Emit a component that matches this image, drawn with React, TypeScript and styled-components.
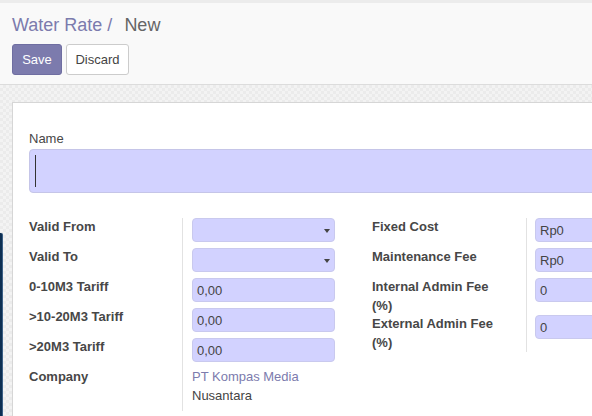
import styled, { createGlobalStyle } from "styled-components";

const GlobalStyle = createGlobalStyle`
  html, body {
    margin: 0;
    padding: 0;
    background: #f9f9f9;
  }
  * {
    box-sizing: border-box;
  }
`;

const Page = styled.div`
  position: relative;
  display: flex;
  flex-direction: column;
  width: 592px;
  height: 416px;
  overflow: hidden;
  font-family: "Liberation Sans", Arial, sans-serif;
  font-size: 13px;
  color: #474747;
`;

const TopStrip = styled.div`
  height: 3px;
  flex-shrink: 0;
  background: #ececec;
`;

const ControlPanel = styled.div`
  flex-shrink: 0;
  height: 82px;
  padding: 12px 12px 0;
  background: #f9f9f9;
  border-bottom: 1px solid #dcdcdc;
`;

const Breadcrumb = styled.div`
  display: flex;
  align-items: center;
  height: 20px;
  font-size: 18px;
  line-height: 20px;
`;

const Crumb = styled.span`
  color: #7c7bad;
  margin-right: 12px;
`;

const Current = styled.span`
  color: #666666;
`;

const Buttons = styled.div`
  display: flex;
  gap: 4px;
  margin-top: 9px;
`;

const Button = styled.button<{ $primary?: boolean }>`
  width: ${(p) => (p.$primary ? "50px" : "63px")};
  height: 31px;
  padding: 0;
  border-radius: 3px;
  border: 1px solid ${(p) => (p.$primary ? "#6f6ea1" : "#cccccc")};
  background: ${(p) => (p.$primary ? "#7c7bad" : "#ffffff")};
  color: ${(p) => (p.$primary ? "#ffffff" : "#444444")};
  font-family: inherit;
  font-size: 13px;
`;

const Content = styled.div`
  flex: 1;
  padding: 17px 0 0 12px;
  background-color: #efefef;
  background-image: repeating-conic-gradient(#ebebeb 0 25%, #f3f3f3 0 50%);
  background-size: 6px 6px;
`;

const Sheet = styled.div`
  width: 720px;
  height: 100%;
  padding: 27px 16px 0;
  background: #ffffff;
  border: 1px solid #d6d6d6;
  border-bottom: none;
`;

const NameLabel = styled.div`
  line-height: 18px;
`;

const NameInput = styled.div`
  display: flex;
  align-items: center;
  height: 44px;
  margin-top: 1px;
  padding-left: 5px;
  background: #d2d2ff;
  border: 1px solid #c5c5e8;
  border-radius: 4px;
`;

const Caret = styled.span`
  width: 1px;
  height: 32px;
  background: #333333;
`;

const Groups = styled.div`
  display: flex;
  margin-top: 25px;
`;

const Group = styled.div<{ $label: number; $field: number }>`
  display: grid;
  grid-template-columns: ${(p) => p.$label}px ${(p) => p.$field}px;
  align-content: start;
`;

const Label = styled.div`
  font-weight: bold;
  line-height: 19px;
  margin-top: -1px;
`;

const FieldCell = styled.div<{ $pad: number }>`
  border-left: 1px solid #e2e2e2;
  padding-left: ${(p) => p.$pad}px;
  padding-bottom: 6px;
`;

const Input = styled.div<{ $width?: number }>`
  position: relative;
  display: flex;
  align-items: center;
  width: ${(p) => (p.$width ? `${p.$width}px` : "100%")};
  height: 24px;
  padding: 0 4px;
  background: #d2d2ff;
  border: 1px solid #c9c9ee;
  border-radius: 4px;
  color: #444444;
`;

const Arrow = styled.span`
  position: absolute;
  right: 4px;
  top: 10px;
  width: 0;
  height: 0;
  border-left: 3.5px solid transparent;
  border-right: 3.5px solid transparent;
  border-top: 4px solid #444444;
`;

const Link = styled.div`
  color: #7c7bad;
  line-height: 19px;
  margin-top: -1px;
`;

const Plain = styled.div`
  color: #444444;
  line-height: 19px;
`;

const EdgeWindow = styled.div`
  position: absolute;
  left: 0;
  top: 233px;
  width: 3px;
  height: 200px;
  background: #0d2f52;
  border-top-right-radius: 2px;
  border-right: 1px solid #3b5f85;
`;

export default function App() {
  return (
    <Page>
      <GlobalStyle />
      <TopStrip />
      <ControlPanel>
        <Breadcrumb>
          <Crumb>Water Rate /</Crumb>
          <Current>New</Current>
        </Breadcrumb>
        <Buttons>
          <Button $primary>Save</Button>
          <Button>Discard</Button>
        </Buttons>
      </ControlPanel>
      <Content>
        <Sheet>
          <NameLabel>Name</NameLabel>
          <NameInput>
            <Caret />
          </NameInput>
          <Groups>
            <Group $label={153} $field={190}>
              <Label>Valid From</Label>
              <FieldCell $pad={9}>
                <Input $width={143}>
                  <Arrow />
                </Input>
              </FieldCell>
              <Label>Valid To</Label>
              <FieldCell $pad={9}>
                <Input $width={143}>
                  <Arrow />
                </Input>
              </FieldCell>
              <Label>0-10M3 Tariff</Label>
              <FieldCell $pad={9}>
                <Input $width={143}>0,00</Input>
              </FieldCell>
              <Label>&gt;10-20M3 Tariff</Label>
              <FieldCell $pad={9}>
                <Input $width={143}>0,00</Input>
              </FieldCell>
              <Label>&gt;20M3 Tariff</Label>
              <FieldCell $pad={9}>
                <Input $width={143}>0,00</Input>
              </FieldCell>
              <Label>Company</Label>
              <FieldCell $pad={9}>
                <Link>PT Kompas Media</Link>
                <Plain>Nusantara</Plain>
              </FieldCell>
            </Group>
            <Group $label={154} $field={180}>
              <Label>Fixed Cost</Label>
              <FieldCell $pad={8}>
                <Input>Rp0</Input>
              </FieldCell>
              <Label>Maintenance Fee</Label>
              <FieldCell $pad={8}>
                <Input>Rp0</Input>
              </FieldCell>
              <Label>
                Internal Admin Fee
                <br />
                (%)
              </Label>
              <FieldCell $pad={8}>
                <Input>0</Input>
              </FieldCell>
              <Label>
                External Admin Fee
                <br />
                (%)
              </Label>
              <FieldCell $pad={8}>
                <Input>0</Input>
              </FieldCell>
            </Group>
          </Groups>
        </Sheet>
      </Content>
      <EdgeWindow />
    </Page>
  );
}
